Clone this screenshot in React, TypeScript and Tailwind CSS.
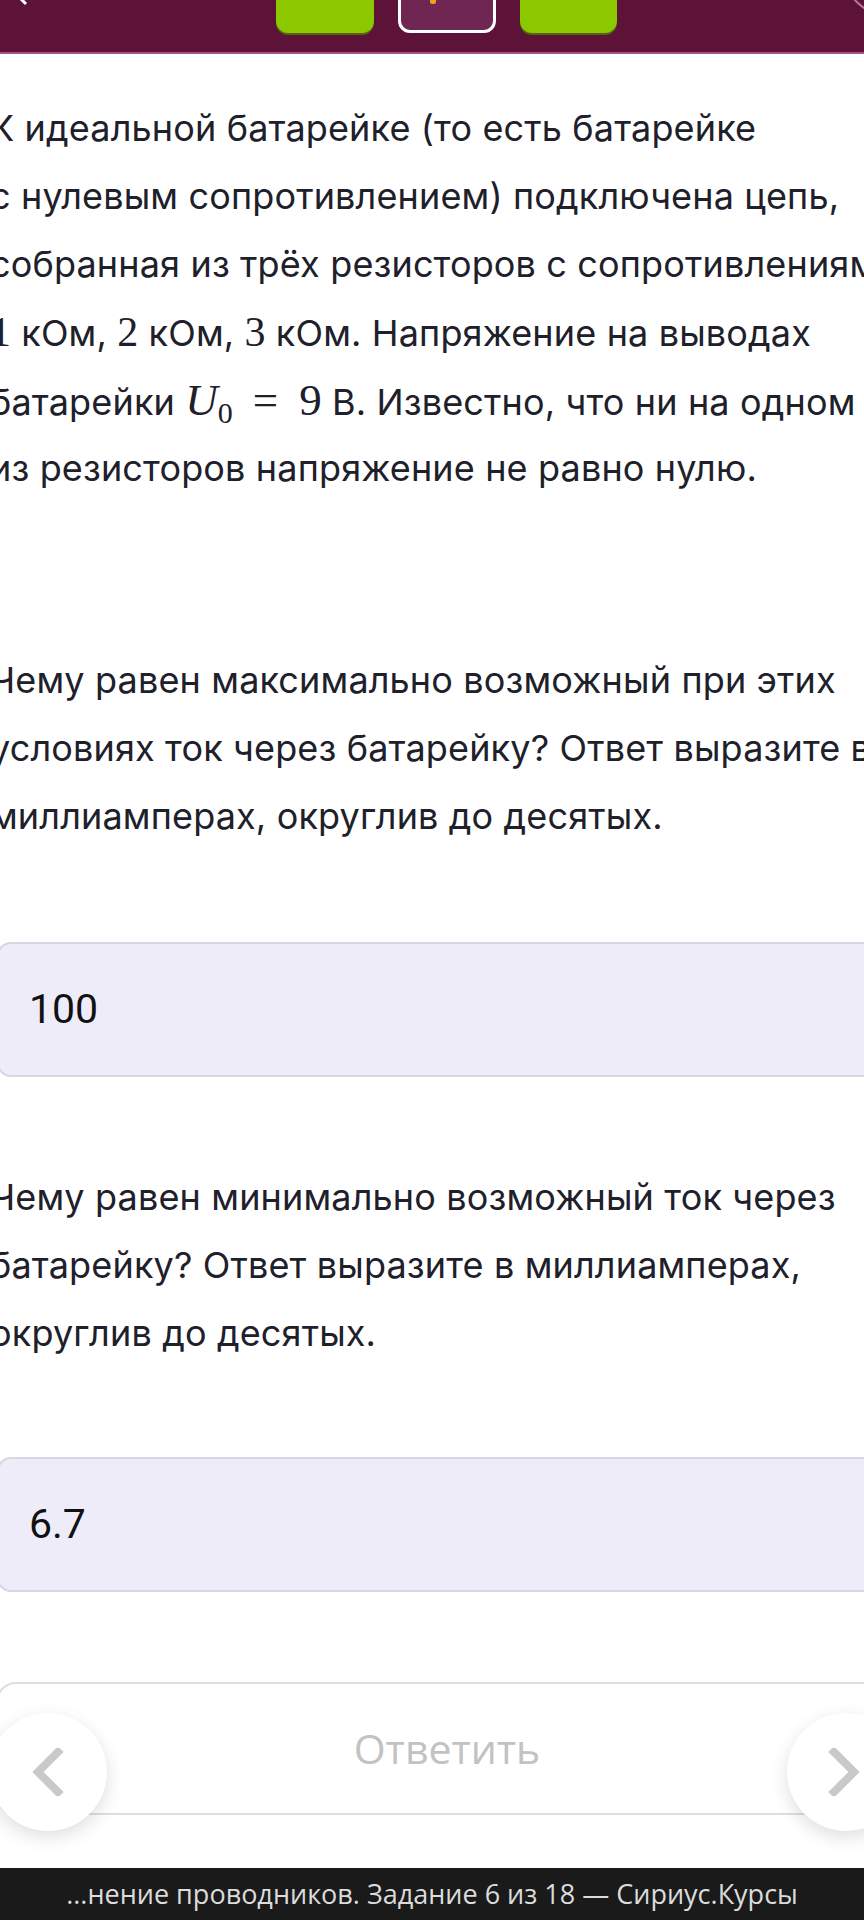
function Num({ children }: { children: React.ReactNode }) {
  return <span className="font-['Liberation_Serif',serif] text-[42px] tracking-normal">{children}</span>
}

function Line({ children }: { children: React.ReactNode }) {
  return <div className="whitespace-nowrap h-[68px] leading-[68px]">{children}</div>
}

function AnswerBox({ value }: { value: string }) {
  return (
    <div className="-ml-[3px] w-[920px] h-[135px] rounded-[14px] border-2 border-[#d7d6e2] bg-[#efecfa] flex items-center pl-[30px]">
      <span className="font-['Roboto',sans-serif] text-[41px] text-[#111111]">{value}</span>
    </div>
  )
}

function Circle({ side }: { side: 'left' | 'right' }) {
  const pos = side === 'left' ? 'left-[-11px]' : 'left-[787px]'
  return (
    <div
      className={`absolute top-[31px] ${pos} w-[118px] h-[118px] rounded-full bg-white shadow-[0_6px_18px_rgba(0,0,0,0.13)] flex items-center justify-center`}
    >
      <svg width="40" height="48" viewBox="0 0 40 48" className={side === 'left' ? '' : 'rotate-180 -translate-x-[2px]'}>
        <polyline points="30,4 10,24 30,44" fill="none" stroke="#c9c9c9" strokeWidth="8" strokeLinecap="square" />
      </svg>
    </div>
  )
}

export default function App() {
  return (
    <div className="w-[864px] min-h-[1920px] overflow-hidden bg-white flex flex-col relative">
      {/* top bar */}
      <div className="h-[54px] bg-[#5d1338] border-b-2 border-[#a35580] relative overflow-hidden flex items-end pb-[19px] pl-[276px] gap-[24px]">
        <svg className="absolute left-[12px] top-[-14px]" width="20" height="20" viewBox="0 0 20 20">
          <polyline points="14,2 6,10 14,18" fill="none" stroke="#ffffff" strokeWidth="3" />
        </svg>
        <div className="absolute left-[845px] top-[-65px] w-[80px] h-[80px] rounded-full border-2 border-[#b27a97]" />
        <div className="w-[98px] h-[70px] rounded-[12px] bg-[#8bc800] shadow-[0_2px_0_#55620f]" />
        <div className="w-[98px] h-[70px] rounded-[12px] bg-[#6f2652] border-[3px] border-white relative">
          <div className="absolute left-[29px] bottom-[26px] w-[6px] h-[8px] rounded-b-[2px] bg-[#f0a020]" />
        </div>
        <div className="w-[97px] h-[70px] rounded-[12px] bg-[#8bc800] shadow-[0_2px_0_#55620f]" />
      </div>

      <div className="-ml-[10px] font-['Inter',sans-serif] text-[36px] tracking-[0.15px] text-[#20202b]">
        <div className="pt-[40px]">
          <Line>К идеальной батарейке (то есть батарейке</Line>
          <Line>с нулевым сопротивлением) подключена цепь,</Line>
          <Line>собранная из трёх резисторов с сопротивлениями</Line>
          <Line>
            <Num>1</Num> кОм, <Num>2</Num> кОм, <Num>3</Num> кОм. Напряжение на выводах
          </Line>
          <Line>
            батарейки{' '}
            <span className="font-['Liberation_Serif',serif] text-[45px] tracking-normal">
              <i>U</i>
              <sub className="text-[30px] not-italic">0</sub>
              <span className="ml-[20px] mr-[21px]">=</span>9
            </span>{' '}
            В. Известно, что ни на одном
          </Line>
          <Line>из резисторов напряжение не равно нулю.</Line>
        </div>

        <div className="pt-[144px]">
          <Line>Чему равен максимально возможный при этих</Line>
          <Line>условиях ток через батарейку? Ответ выразите в</Line>
          <Line>миллиамперах, округлив до десятых.</Line>
        </div>
      </div>

      <div className="pt-[92px]">
        <AnswerBox value="100" />
      </div>

      <div className="-ml-[10px] pt-[86px] font-['Inter',sans-serif] text-[36px] tracking-[0.15px] text-[#20202b]">
        <Line>Чему равен минимально возможный ток через</Line>
        <Line>батарейку? Ответ выразите в миллиамперах,</Line>
        <Line>округлив до десятых.</Line>
      </div>

      <div className="pt-[90px]">
        <AnswerBox value="6.7" />
      </div>

      <div className="pt-[90px]">
        <div className="relative">
          <div className="-ml-[4px] w-[902px] h-[133px] rounded-[20px] border-2 border-[#dedede] bg-white flex items-center justify-center">
            <span className="font-['Open_Sans',sans-serif] text-[41px] text-[#c2c2c2]">Ответить</span>
          </div>
          <Circle side="left" />
          <Circle side="right" />
        </div>
      </div>

      <div className="flex-1" />

      <div className="h-[52px] bg-[#1a1a1a] flex items-center justify-center">
        <span className="font-['Open_Sans',sans-serif] text-[27px] text-[#dcdcdc] whitespace-nowrap">
          ...нение проводников. Задание 6 из 18 — Сириус.Курсы
        </span>
      </div>
    </div>
  )
}
